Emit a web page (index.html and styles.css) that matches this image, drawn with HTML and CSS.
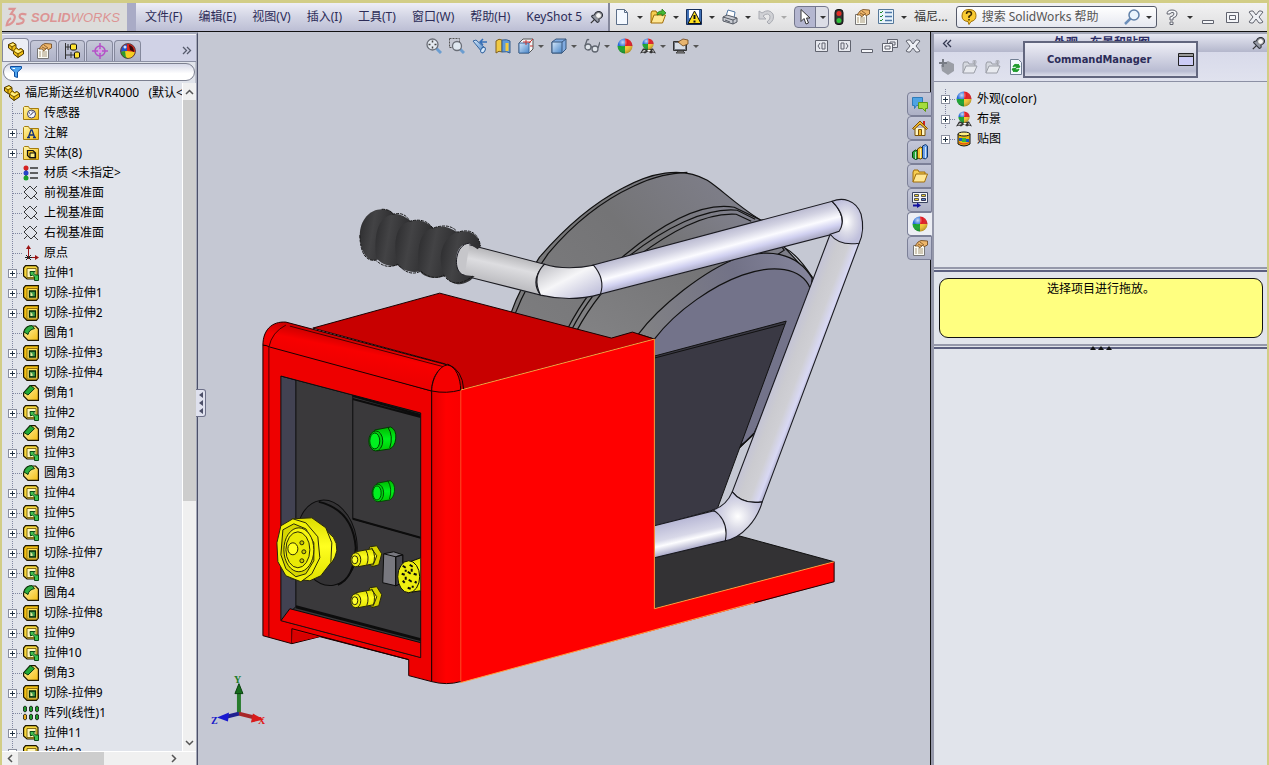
FILE: index.html
```html
<!DOCTYPE html>
<html lang="zh-CN">
<head>
<meta charset="utf-8">
<title>SolidWorks</title>
<link rel="stylesheet" href="styles.css">
</head>
<body>

<!-- icon library -->
<svg class="defs" aria-hidden="true">
  <defs>
    <linearGradient id="gold" x1="0" y1="0" x2="1" y2="1"><stop offset="0" stop-color="#fff7b0"/><stop offset="1" stop-color="#f5bd10"/></linearGradient>
    <linearGradient id="blue" x1="0" y1="0" x2="1" y2="1"><stop offset="0" stop-color="#d5e8fa"/><stop offset="1" stop-color="#4a86c8"/></linearGradient>
    <radialGradient id="shine" cx=".35" cy=".25" r=".8"><stop offset="0" stop-color="#fff" stop-opacity=".75"/><stop offset=".4" stop-color="#fff" stop-opacity="0"/><stop offset="1" stop-color="#000" stop-opacity=".3"/></radialGradient>
  </defs>
  <symbol id="part" viewBox="0 0 16 16"><path d="M.500 2.500L5 .500l3 2v3l2.500 2 2.500-1 2.500 2V12L10 15.500 5.500 12V9.500L.500 6z" fill="#f0bf14" stroke="#4a3500"/><path d="M.500 2.500L4 5l4-2.500M4 5v3.500M5.500 9l4.500 3 5.500-3.500M10 12v3.500M8 6L5.500 9" fill="none" stroke="#4a3500" stroke-width=".8"/><path d="M2 2.500l3-1 1.500 1L4 4zM6.500 9L8 7l3 2 2-1.500 1 1-4 2.500z" fill="#fff08a"/></symbol>
  <symbol id="ball" viewBox="0 0 16 16"><path d="M8 8L8 0.5A7.5 7.5 0 0 1 15.5 8z" fill="#e01c24"/><path d="M8 8H15.5A7.5 7.5 0 0 1 8 15.5z" fill="#f8c830"/><path d="M8 8V15.5A7.5 7.5 0 0 1 .5 8z" fill="#17a32c"/><path d="M8 8H.5A7.5 7.5 0 0 1 8 .5z" fill="#2469d8"/><circle cx="8" cy="8" r="7.5" fill="url(#shine)"/></symbol>
  <symbol id="balldark" viewBox="0 0 16 16"><circle cx="8" cy="8" r="7.5" fill="#d9251d"/><path d="M7 1a7.500 7.500 0 0 0-6 8l6-1z" fill="#2253c8"/><path d="M1 9l6-1 1 7.500A7.500 7.500 0 0 1 1 9z" fill="#2d9b2d"/><path d="M1 9l6-1 8 1a7.500 7.500 0 0 1-7 6.500q-4-2-7-6.500z" fill="#f6ce20"/><path d="M1 9l4-1 1 7q-4-2-5-6z" fill="#2d9b2d"/><path d="M9 2q5 1 5 7l-4-2z" fill="#380808"/><circle cx="8" cy="8" r="7.500" fill="none" stroke="#333" stroke-width=".7"/><circle cx="5" cy="4" r="1.500" fill="#fff" opacity=".8"/></symbol>
  <symbol id="scene" viewBox="0 0 16 16"><path d="M0 15.500l3-5h10l3 5-3-1-2 1-3-2-3 2-2-1z" fill="#333"/><path d="M2 14l2-2 2 1zM7 12l2 2 2-2zM12 13l1-1 1 2z" fill="#fff"/><use href="#ball" x="2" y="0" width="12" height="12"/></symbol>
  <symbol id="decal" viewBox="0 0 16 16"><path d="M2 3v10q6 4 12 0V3z" fill="#e8b90e" stroke="#111"/><ellipse cx="8" cy="3" rx="6" ry="2" fill="#ffef80" stroke="#111"/><path d="M3 7h4v3H3zM9 8h4v3H9z" fill="#1858c8"/><path d="M6 7h4v4H6z" fill="#38b83a"/><path d="M3 11q5 3 10 0v1q-5 3-10 0z" fill="#df2a1c"/></symbol>
  <symbol id="hand" viewBox="0 0 16 16"><path d="M1.500 5.500h11v10h-11z" fill="#fbfbf5" stroke="#777"/><path d="M3 9h2M6 9h5M3 11h2M6 11h5M3 13h2M6 13h5" stroke="#a8997a"/><path d="M3 6l3-4 3-1.500 6.500.500v4l-3 1.500-2-1-3 2.500-1-2z" fill="#eeb66b" stroke="#6b4418" stroke-width=".8"/><path d="M6 4l4 2M8 2l4 3" stroke="#6b4418" stroke-width=".7"/></symbol>
  <symbol id="config" viewBox="0 0 16 16"><path d="M1.500 0v16M1 4h6M1 12h10M4 1v6M7 9v6" stroke="#333" fill="none"/><path d="M6.500 2l1-1h4l1 1v4l-1 1h-4l-1-1zM10.500 10l1-1h3l1 1v4l-1 1h-4z" fill="#ffe330" stroke="#111"/></symbol>
  <symbol id="target" viewBox="0 0 16 16"><circle cx="8" cy="8" r="5" fill="none" stroke="#b551c7" stroke-width="1.500"/><path d="M8 0v6M8 10v6M0 8h6M10 8h6" stroke="#b551c7" stroke-width="1.500"/><circle cx="8" cy="8" r="2" fill="#e48df0"/></symbol>
  <symbol id="folder" viewBox="0 0 16 16"><path d="M.500 14.500v-12l1-1h4l1 2h9v11z" fill="url(#gold)" stroke="#a57c0c"/></symbol>
  <symbol id="sensor" viewBox="0 0 16 16"><use href="#folder"/><circle cx="8.500" cy="9" r="4" fill="#f5f8ff" stroke="#446"/><path d="M7 10.500l4-4M6 8h1M8.500 6h1" stroke="#224"/></symbol>
  <symbol id="note" viewBox="0 0 16 16"><use href="#folder"/><path d="M5.500 12l2.500-7h1l2.500 7M6.500 10h4M4 12.500h3M10 12.500h3" stroke="#103078" stroke-width="1.300" fill="none"/></symbol>
  <symbol id="solid" viewBox="0 0 16 16"><use href="#folder"/><path d="M4.500 5.500h5.500l2.500 2.500v5h-5.500l-2.500-2.500z" fill="#e6b818" stroke="#111" stroke-width="1.200"/><path d="M7 8h5v4.500H7z" fill="#ffef80" stroke="#111"/></symbol>
  <symbol id="material" viewBox="0 0 16 16"><path d="M3 2v12M7 3h8M7 8h8M7 13h8" stroke="#333" stroke-width="1.500"/><circle cx="3" cy="3" r="2.500" fill="#d52222"/><circle cx="3" cy="8" r="2.500" fill="#2543c8"/><circle cx="3" cy="13" r="2.500" fill="#19a02c"/></symbol>
  <symbol id="plane" viewBox="0 0 16 16"><path d="M7 1l7 7-6 6-7-7zM0 1l4 4M11 11l4 4M14 1l-3 3M4 11l-3 3" fill="none" stroke="#222" stroke-width=".9"/></symbol>
  <symbol id="origin" viewBox="0 0 16 16"><path d="M5.500 14V2M5 12.500h9" stroke="#9c1414"/><path d="M3 4l2.500-4L8 4zM12 10l4 2.500-4 2.500z" fill="#9c1414"/><path d="M3 10l5 5M8 10l-5 5M2 12.500h7" stroke="#222"/></symbol>
  <symbol id="extrude" viewBox="0 0 16 16"><path d="M.600 3l2-2.400H13l2 2V13l-2 1H4L.600 11z" fill="#f8d83c" stroke="#1d1600" stroke-width="1.200"/><path d="M4 3.500h9v9H4z" fill="#fff6b8" stroke="#6a5200" stroke-width=".8"/><path d="M7 6.500h5L10.500 8l2 2H15.500v5.500h-4v-3.500l-2-2L7.500 11z" fill="#3fc151" stroke="#0c4a14"/></symbol>
  <symbol id="cut" viewBox="0 0 16 16"><path d="M.600 3l2-2.400H15.400V13l-2 2.400H4L.600 12z" fill="#f2bf14" stroke="#1d1600" stroke-width="1.200"/><path d="M4 3.500h10.500v10.500H4z" fill="#ffe15a" stroke="#7a5c00" stroke-width=".8"/><path d="M6.500 6h6v6h-6z" fill="#3f9c4a" stroke="#062b0a" stroke-width="1.300"/><path d="M7.500 7l2 2v2h-2z" fill="#e5e89c"/></symbol>
  <symbol id="fillet" viewBox="0 0 16 16"><path d="M.600 8q1-6 6-7h6l2.800 3v11.400H5L.600 11z" fill="url(#gold)" stroke="#1d1600" stroke-width="1.200"/><path d="M1 7Q3 .600 9 .600l2.500 3Q6 4.500 5 9.500z" fill="#2fae42" stroke="#063c0d"/></symbol>
  <symbol id="chamfer" viewBox="0 0 16 16"><path d="M.600 8L7 .600h5l3.400 3.400v11.400H5L.600 11z" fill="url(#gold)" stroke="#1d1600" stroke-width="1.200"/><path d="M1 7.500L7.500.600l4 3L5 10z" fill="#22a838" stroke="#063c0d"/></symbol>
  <symbol id="pattern" viewBox="0 0 16 16"><g stroke="#111" stroke-width=".8"><path d="M.500 2q1.500-2 3 0v4q-1.500 2-3 0zM6.500 2q1.500-2 3 0v4q-1.500 2-3 0zM12.500 2q1.500-2 3 0v4q-1.500 2-3 0zM6.500 10q1.500-2 3 0v4q-1.500 2-3 0zM12.500 10q1.500-2 3 0v4q-1.500 2-3 0z" fill="#1f9a2c"/><path d="M.500 10q1.500-2 3 0v4q-1.500 2-3 0z" fill="#edab1e"/></g></symbol>
  <symbol id="pin" viewBox="0 0 16 16"><path d="M6 10l-5 5" stroke="#333" stroke-width="1.500"/><path d="M2 7l7 7q3 0 2-4l3-2q3-3 0-6T7 2L5 5Q2 5 2 7z" fill="#9498a4" stroke="#30333b" stroke-width="1.300"/><ellipse cx="10.500" cy="5.500" rx="3.500" ry="3.500" fill="#f7f7f7" stroke="#555" stroke-width=".7"/></symbol>
  <symbol id="close" viewBox="0 0 16 16"><path d="M1 3l2-1h2l3 4 3-4h2l2 1-4 5 4 5-2 1h-2l-3-4-3 4H3l-2-1 4-5z" fill="#eef0f5" stroke="#60636e"/></symbol>
  <symbol id="min" viewBox="0 0 16 16"><path d="M2.500 11.500h11v3h-11z" fill="#f5f6f9" stroke="#60636e"/></symbol>
  <symbol id="max" viewBox="0 0 16 16"><path d="M2.500 3.500h12v10h-12zM5.500 6.500h6v4h-6z" fill="#f5f6f9" stroke="#60636e"/></symbol>
  <symbol id="restore" viewBox="0 0 16 16"><path d="M5.500 1.500h10v8h-10zM8 4h5v3H8z" fill="#e8eaef" stroke="#60636e"/><path d="M.500 5.500h10v8H.500zM3 8h5v3H3z" fill="#f5f6f9" stroke="#60636e"/></symbol>
  <symbol id="open" viewBox="0 0 16 16"><path d="M1 14V4l1-2h4l1 2h6v3" fill="#f6cd50" stroke="#a06d08"/><path d="M1 14l3-8h11.500l-3 8z" fill="#ffe794" stroke="#a06d08"/></symbol>
  <symbol id="grayopen" viewBox="0 0 16 16"><path d="M1 14V5l1-2h4l1 2h6v3" fill="#d5d8df" stroke="#9a9da6"/><path d="M1 14l3-7h11l-3 7z" fill="#e8eaef" stroke="#9a9da6"/><path d="M10 3h5M12.500 1v5M11 1l3 4M14 1l-3 4" stroke="#a4a7ae" stroke-width=".8"/></symbol>
  <symbol id="zoomfit" viewBox="0 0 16 16"><path d="M10 10l5 5" stroke="#6b9dd0" stroke-width="3"/><circle cx="6.500" cy="6.500" r="5.500" fill="#e4eaf1" stroke="#6b6f78" stroke-width="1.300"/><path d="M6.500 2.500v2M6.500 8.500v2M2.500 6.500h2M8.500 6.500h2" stroke="#444" stroke-width="1.500"/></symbol>
  <symbol id="zoomarea" viewBox="0 0 16 16"><path d="M.500.500h10v9H.500z" fill="none" stroke="#555" stroke-dasharray="2 1"/><path d="M11 11l4 4" stroke="#6b9dd0" stroke-width="3"/><circle cx="8" cy="8" r="4.500" fill="#dfe7f0" stroke="#6b6f78" stroke-width="1.300"/></symbol>
  <symbol id="prevview" viewBox="0 0 16 16"><path d="M1 3l3-1 9 8-3 4z" fill="url(#blue)" stroke="#3465a0"/><ellipse cx="11" cy="12" rx="2" ry="3" transform="rotate(30 11 12)" fill="#d4e8fb" stroke="#3465a0"/><path d="M15 4H9M11 1L8 4l3 3" fill="none" stroke="#346fb8" stroke-width="1.500"/></symbol>
  <symbol id="section" viewBox="0 0 16 16"><path d="M1 3q3-3 6-1v12q-3-2-6 1z" fill="#efc944" stroke="#806020"/><path d="M7 2q5-1 8 1v12q-3-2-8-1z" fill="#5f9bdb" stroke="#375f90"/><path d="M10.500 5h3v8h-3z" fill="#f3cb3e"/></symbol>
  <symbol id="viewcube" viewBox="0 0 16 16"><path d="M1 5l4-4h10v10l-4 4H1z" fill="#f4f4f4" stroke="#555"/><path d="M1 5h10v10H1z" fill="url(#blue)" stroke="#3f6da2"/><path d="M11 5l4-4M8 2v5M5 4h8M12 8h3" stroke="#c43434" fill="none"/></symbol>
  <symbol id="cube" viewBox="0 0 16 16"><path d="M1 4l4-3h10v10l-4 4H1z" fill="#80abe0" stroke="#39587e"/><path d="M1 4h10v11H1z" fill="url(#blue)" stroke="#39587e"/><path d="M11 4l4-3" stroke="#39587e"/></symbol>
  <symbol id="glasses" viewBox="0 0 16 16"><g fill="#dfe4ea" stroke="#606670" stroke-width="1.300"><circle cx="4" cy="9" r="3"/><circle cx="11" cy="11" r="3"/><path d="M7 9q1-1 1 1M1 8l2-6q1-1 2 0M14 10l2-6" fill="none"/></g></symbol>
  <symbol id="monitor" viewBox="0 0 16 16"><path d="M.500 3.500h13v9H.500z" fill="#707580" stroke="#333"/><path d="M2 5h10v6H2z" fill="#d7dde5"/><path d="M3 15h9l-2-2H5z" fill="#888" stroke="#444"/><path d="M5 4l5-3 5 1v4l-5 2z" fill="#e7b46e" stroke="#6b4418" stroke-width=".8"/></symbol>
</svg>

<header class="titlebar">
  <div class="logo">
    <svg width="24" height="22" viewBox="0 0 28 22" aria-hidden="true"><g fill="none" stroke="#dc9494" stroke-width="2.500"><path d="M4 1.500h7l-4 6q6 0 4 6-2 6-9 7 1-6 5-8"/><path d="M25 8q-8-2-8 2 0 2 3 3t1 4q-2 2-8 2"/></g></svg>
    <span class="wordmark"><b>SOLID</b>WORKS</span>
  </div>
  <nav class="menu">
    <button>文件(F)</button>
    <button>编辑(E)</button>
    <button>视图(V)</button>
    <button>插入(I)</button>
    <button>工具(T)</button>
    <button>窗口(W)</button>
    <button>帮助(H)</button>
    <button>KeyShot 5</button>
    <button class="pin" aria-label="pin"><svg class="ic small"><use href="#pin"/></svg></button>
  </nav>
  <div class="toolbar">
    <button class="tool drop" aria-label="新建"><svg class="ic" viewBox="0 0 16 16"><path d="M2.500.500h8l3 3v12h-11z" fill="#f4f9ff" stroke="#5b6e88"/><path d="M10.500.500v3h3" fill="none" stroke="#5b6e88"/></svg></button>
    <button class="tool drop" aria-label="打开"><svg class="ic" viewBox="0 0 16 16"><use href="#open"/><path d="M7 6q0-4 5-4V0l4 4-4 3V5Q9 5 7 6z" fill="#45b935" stroke="#1c6f13" stroke-width=".7"/></svg></button>
    <button class="tool drop" aria-label="保存"><svg class="ic" viewBox="0 0 16 16"><path d="M.500.500h15v15H.500z" fill="#3f6fb5" stroke="#16305e"/><path d="M3 1h10v8H3z" fill="#fff"/><path d="M8.500 2L15 14.500H2z" fill="#ffe11d" stroke="#111"/><path d="M8.500 6v4M8.500 11.500v2" stroke="#111" stroke-width="2"/></svg></button>
    <button class="tool drop" aria-label="打印"><svg class="ic" viewBox="0 0 16 16"><path d="M4 7l2-6 7 2-1 6z" fill="#fff" stroke="#5277a2"/><path d="M1 8l4-2 10 3v4l-4 2-10-3z" fill="#c8cbd2" stroke="#555a64"/><path d="M1 8l10 3 4-2M11 11v4M3 11l5 2" fill="none" stroke="#555a64"/></svg></button>
    <button class="tool drop off" aria-label="撤消"><svg class="ic" viewBox="0 0 16 16"><path d="M1 2v8h7L5 7q5-4 7 0 1 3-3 6l2 2q6-4 4-10-4-6-11-1z" fill="#d0d1d5" stroke="#a9abb2"/></svg></button>
    <button class="select drop" aria-label="选择"><svg class="ic" viewBox="0 0 16 16"><path d="M4 .500v12l3-3 2 5.500 2.500-1L9.500 9H13z" fill="#fff" stroke="#333"/></svg></button>
    <button class="tool light" aria-label="重建模型"><svg class="ic" viewBox="0 0 16 16"><rect x="4" y=".500" width="8" height="15" rx="3" fill="#333" stroke="#111"/><circle cx="8" cy="4.500" r="2.500" fill="#e52d26"/><circle cx="8" cy="11.500" r="2.500" fill="#2fc23b"/></svg></button>
    <button class="tool" aria-label="文件属性"><svg class="ic"><use href="#hand"/></svg></button>
    <button class="tool drop" aria-label="选项"><svg class="ic" viewBox="0 0 16 16"><path d="M.500.500h15v14H.500z" fill="#e8f3fb" stroke="#56789a"/><path d="M2 3l1 1 2-2M2 7l1 1 2-2M2 11l1 1 2-2" stroke="#1c8a2c" fill="none"/><path d="M7 3.500h7M7 7.500h7M7 11.500h7" stroke="#4c78a8" stroke-width="1.500"/></svg></button>
    <span class="docname">福尼...</span>
    <form class="search">
      <svg class="ic" viewBox="0 0 16 16"><path d="M8 .500q7 0 7 6 0 5-5 6l-2 3-1-3Q1 12 1 7 1 .500 8 .500z" fill="#f9cb32" stroke="#9c6e06"/><path d="M5.500 5q0-2.500 2.500-2.500T10.500 5Q10.500 6 8 7.500V9M8 10v1.500" fill="none" stroke="#3b2900" stroke-width="1.500"/></svg>
      <input type="text" aria-label="搜索" placeholder="搜索 SolidWorks 帮助">
      <button type="button" class="drop" aria-label="搜索"><svg class="ic" viewBox="0 0 16 16"><path d="M7 9l-6 6" stroke="#6d8fba" stroke-width="2.500"/><circle cx="10" cy="6" r="5" fill="#eaf4fd" stroke="#6080a8" stroke-width="1.500"/></svg></button>
    </form>
    <div class="wincontrols">
      <button class="tool drop" aria-label="帮助"><svg class="ic" viewBox="0 0 16 16"><path d="M3 5q0-4 5-4t5 4q0 3-4 4v2H6V8q4-1 4-3T8 3.500 6 5zM6 13h3v2.500H6z" fill="#f5f6f9" stroke="#60636e"/></svg></button>
      <button aria-label="最小化"><svg class="ic"><use href="#min"/></svg></button>
      <button aria-label="最大化"><svg class="ic"><use href="#max"/></svg></button>
      <button aria-label="关闭"><svg class="ic"><use href="#close"/></svg></button>
    </div>
  </div>
</header>

<main class="workspace">

  <aside class="manager">
    <div class="tabs">
      <button class="tab active" aria-label="FeatureManager"><svg class="ic"><use href="#part"/></svg></button>
      <button class="tab" aria-label="PropertyManager"><svg class="ic"><use href="#hand"/></svg></button>
      <button class="tab" aria-label="ConfigurationManager"><svg class="ic"><use href="#config"/></svg></button>
      <button class="tab" aria-label="DimXpertManager"><svg class="ic"><use href="#target"/></svg></button>
      <button class="tab" aria-label="DisplayManager"><svg class="ic"><use href="#balldark"/></svg></button>
      <button class="more" aria-label="更多"><svg width="10" height="9" viewBox="0 0 10 9"><path d="M1 1l3.500 3.500L1 8M5 1l3.500 3.500L5 8" fill="none" stroke="#555a6c" stroke-width="1.300"/></svg></button>
    </div>
    <div class="filter">
      <input type="text" aria-label="过滤器">
      <svg width="12" height="12" viewBox="0 0 12 12"><path d="M.500.500h11v2L7.500 6v5.500l-3-1V6L.500 2.500z" fill="#4fa4ee" stroke="#0d4a9c"/><path d="M2 2h3v1H3z" fill="#fff"/></svg>
    </div>
    <div class="treebox">
      <ul class="tree">
        <li class="root"><svg class="ic"><use href="#part"/></svg>福尼斯送丝机VR4000&nbsp;&nbsp; (默认&lt;</li>
        <li><span class="twig"></span><svg class="ic"><use href="#sensor"/></svg>传感器</li>
        <li><span class="twig"><button class="exp" aria-label="展开"></button></span><svg class="ic"><use href="#note"/></svg>注解</li>
        <li><span class="twig"><button class="exp" aria-label="展开"></button></span><svg class="ic"><use href="#solid"/></svg>实体(8)</li>
        <li><span class="twig"></span><svg class="ic"><use href="#material"/></svg>材质 &lt;未指定&gt;</li>
        <li><span class="twig"></span><svg class="ic"><use href="#plane"/></svg>前视基准面</li>
        <li><span class="twig"></span><svg class="ic"><use href="#plane"/></svg>上视基准面</li>
        <li><span class="twig"></span><svg class="ic"><use href="#plane"/></svg>右视基准面</li>
        <li><span class="twig"></span><svg class="ic"><use href="#origin"/></svg>原点</li>
        <li><span class="twig"><button class="exp" aria-label="展开"></button></span><svg class="ic"><use href="#extrude"/></svg>拉伸1</li>
        <li><span class="twig"><button class="exp" aria-label="展开"></button></span><svg class="ic"><use href="#cut"/></svg>切除-拉伸1</li>
        <li><span class="twig"><button class="exp" aria-label="展开"></button></span><svg class="ic"><use href="#cut"/></svg>切除-拉伸2</li>
        <li><span class="twig"></span><svg class="ic"><use href="#fillet"/></svg>圆角1</li>
        <li><span class="twig"><button class="exp" aria-label="展开"></button></span><svg class="ic"><use href="#cut"/></svg>切除-拉伸3</li>
        <li><span class="twig"><button class="exp" aria-label="展开"></button></span><svg class="ic"><use href="#cut"/></svg>切除-拉伸4</li>
        <li><span class="twig"></span><svg class="ic"><use href="#chamfer"/></svg>倒角1</li>
        <li><span class="twig"><button class="exp" aria-label="展开"></button></span><svg class="ic"><use href="#extrude"/></svg>拉伸2</li>
        <li><span class="twig"></span><svg class="ic"><use href="#chamfer"/></svg>倒角2</li>
        <li><span class="twig"><button class="exp" aria-label="展开"></button></span><svg class="ic"><use href="#extrude"/></svg>拉伸3</li>
        <li><span class="twig"></span><svg class="ic"><use href="#fillet"/></svg>圆角3</li>
        <li><span class="twig"><button class="exp" aria-label="展开"></button></span><svg class="ic"><use href="#extrude"/></svg>拉伸4</li>
        <li><span class="twig"><button class="exp" aria-label="展开"></button></span><svg class="ic"><use href="#extrude"/></svg>拉伸5</li>
        <li><span class="twig"><button class="exp" aria-label="展开"></button></span><svg class="ic"><use href="#extrude"/></svg>拉伸6</li>
        <li><span class="twig"><button class="exp" aria-label="展开"></button></span><svg class="ic"><use href="#cut"/></svg>切除-拉伸7</li>
        <li><span class="twig"><button class="exp" aria-label="展开"></button></span><svg class="ic"><use href="#extrude"/></svg>拉伸8</li>
        <li><span class="twig"></span><svg class="ic"><use href="#fillet"/></svg>圆角4</li>
        <li><span class="twig"><button class="exp" aria-label="展开"></button></span><svg class="ic"><use href="#cut"/></svg>切除-拉伸8</li>
        <li><span class="twig"><button class="exp" aria-label="展开"></button></span><svg class="ic"><use href="#extrude"/></svg>拉伸9</li>
        <li><span class="twig"><button class="exp" aria-label="展开"></button></span><svg class="ic"><use href="#extrude"/></svg>拉伸10</li>
        <li><span class="twig"></span><svg class="ic"><use href="#chamfer"/></svg>倒角3</li>
        <li><span class="twig"><button class="exp" aria-label="展开"></button></span><svg class="ic"><use href="#cut"/></svg>切除-拉伸9</li>
        <li><span class="twig"></span><svg class="ic"><use href="#pattern"/></svg>阵列(线性)1</li>
        <li><span class="twig"><button class="exp" aria-label="展开"></button></span><svg class="ic"><use href="#extrude"/></svg>拉伸11</li>
        <li><span class="twig"><button class="exp" aria-label="展开"></button></span><svg class="ic"><use href="#extrude"/></svg>拉伸12</li>
      </ul>
      <div class="vscroll">
        <button aria-label="向上"><svg width="9" height="6" viewBox="0 0 9 6"><path d="M1 5l3.500-3.500L8 5" fill="none" stroke="#555" stroke-width="1.500"/></svg></button>
        <div class="vthumb"></div>
        <button class="end" aria-label="向下"><svg width="9" height="6" viewBox="0 0 9 6"><path d="M1 1l3.500 3.500L8 1" fill="none" stroke="#555" stroke-width="1.500"/></svg></button>
      </div>
    </div>
    <div class="hscroll">
      <button aria-label="向左"><svg width="6" height="9" viewBox="0 0 6 9"><path d="M5 1L1.500 4.500 5 8" fill="none" stroke="#555" stroke-width="1.500"/></svg></button>
      <div class="hthumb"></div>
      <button class="end" aria-label="向右"><svg width="6" height="9" viewBox="0 0 6 9"><path d="M1 1l3.500 3.500L1 8" fill="none" stroke="#555" stroke-width="1.500"/></svg></button>
    </div>
  </aside>

  <section class="viewport">
    <svg class="scene" viewBox="198 32 733 733" preserveAspectRatio="xMidYMid meet">
      <defs>
        <linearGradient id="tubeA" gradientUnits="userSpaceOnUse" x1="505" y1="253" x2="498" y2="284"><stop offset="0" stop-color="#b5b5b8"/><stop offset=".4" stop-color="#dddde0"/><stop offset="1" stop-color="#bcbcc0"/></linearGradient>
        <linearGradient id="tubeB" gradientUnits="userSpaceOnUse" x1="712" y1="233" x2="720" y2="263"><stop offset="0" stop-color="#b9b9d0"/><stop offset=".25" stop-color="#d2d2e2"/><stop offset=".55" stop-color="#fbfbff"/><stop offset=".8" stop-color="#d0d0f0"/><stop offset="1" stop-color="#acacc6"/></linearGradient>
        <linearGradient id="tubeC" gradientUnits="userSpaceOnUse" x1="782" y1="363" x2="813" y2="375"><stop offset="0" stop-color="#c4c4d6"/><stop offset=".3" stop-color="#cbcbd0"/><stop offset=".6" stop-color="#cfcfd4"/><stop offset=".85" stop-color="#d8d8f4"/><stop offset="1" stop-color="#aaaac8"/></linearGradient>
        <linearGradient id="tubeD" gradientUnits="userSpaceOnUse" x1="686" y1="519" x2="693" y2="549"><stop offset="0" stop-color="#b9b9d6"/><stop offset=".5" stop-color="#d8d8e8"/><stop offset=".68" stop-color="#fdfdff"/><stop offset="1" stop-color="#a9a9c8"/></linearGradient>
        <linearGradient id="elbow" x1="0" y1="0" x2="1" y2="1"><stop offset="0" stop-color="#b8b8be"/><stop offset=".45" stop-color="#f6f6f8"/><stop offset="1" stop-color="#b4b4d4"/></linearGradient>
        <radialGradient id="knee"><stop offset="0" stop-color="#fff"/><stop offset=".5" stop-color="#dcdce8"/><stop offset="1" stop-color="#c0c0dc"/></radialGradient>
        <linearGradient id="drum" x1="0" y1="1" x2="1" y2="0"><stop offset="0" stop-color="#848486"/><stop offset=".6" stop-color="#747476"/><stop offset="1" stop-color="#858596"/></linearGradient>
        <linearGradient id="flange" gradientUnits="userSpaceOnUse" x1="640" y1="330" x2="812" y2="270"><stop offset="0" stop-color="#828284"/><stop offset=".6" stop-color="#727287"/><stop offset="1" stop-color="#85859c"/></linearGradient>
        <linearGradient id="pillar" x1="0" x2="1" y1="0" y2="0"><stop offset="0" stop-color="#e20000"/><stop offset=".5" stop-color="#ff0000"/><stop offset="1" stop-color="#fa0000"/></linearGradient>
        <linearGradient id="rolltop" gradientUnits="userSpaceOnUse" x1="362" y1="341" x2="356" y2="371"><stop offset="0" stop-color="#d00000"/><stop offset=".35" stop-color="#f80000"/><stop offset="1" stop-color="#ed0000"/></linearGradient>
        <linearGradient id="grip" x1="0" y1="0" x2="1" y2=".25"><stop offset="0" stop-color="#2b2b2d"/><stop offset=".45" stop-color="#434345"/><stop offset="1" stop-color="#2d2d2f"/></linearGradient>
        <linearGradient id="yel" x1="0" y1="0" x2="0" y2="1"><stop offset="0" stop-color="#dcdc00"/><stop offset=".45" stop-color="#ffff20"/><stop offset="1" stop-color="#e2e200"/></linearGradient>
        <linearGradient id="grn" x1="0" y1="0" x2="0" y2="1"><stop offset="0" stop-color="#00b800"/><stop offset=".5" stop-color="#00f01c"/><stop offset="1" stop-color="#00c800"/></linearGradient>
      </defs>

      <!-- wire drum -->
      <g stroke="#111" stroke-width="1.2" fill="none">
        <path d="M511 314C518 294 529 274 540 257C565 228 592 204 623 188C650 173 682 165 708 180C722 189 736 204 760 219L786 248L813 277L812 300L755 433L655 500L600 345z" fill="url(#drum)"/>
        <path d="M515 315C524 292 535 272 549 253C575 222 604 200 634 186C656 175 672 173 688 172"/>
        <path d="M568 329C580 305 600 278 625 255C660 226 700 201 735 207L764 221L785 250L640 345L568 345z" fill="url(#drum)"/>
        <path d="M572 330C585 304 603 281 628 257C665 228 706 207 738 210L756 219M577 331C590 307 607 284 633 260C670 232 705 212 737 214L752 221"/>
        <path d="M786 248Q798 254 813 277"/>
        <path d="M639 334C660 306 705 270 740 257C768 249 797 251 813 278L811 300L755 433L741 447L655 500V339z" fill="url(#flange)"/>
        <path d="M655 339C678 309 715 285 743 275C774 264 802 267 811 288V310L755 433L741 447L655 500z" fill="#73738a"/>
        <path d="M755 434Q747 442 739 447"/>
      </g>

      <!-- plate under drum -->
      <path d="M655 356L787 321L718 509L655 527z" fill="#3a3944" stroke="#111"/>
      <path d="M655 358L785 324" stroke="#111" fill="none"/>
      <path d="M655 558L736 535L835 562L655 609z" fill="#333234" stroke="#111"/>

      <!-- handle tubes -->
      <g stroke="#1a1a20" stroke-width="1.1">
        <path d="M655 526L714 511L734 516L726 541L655 558z" fill="url(#tubeD)"/>
        <path d="M831 234L860 243L763 502Q743 505 733 492z" fill="url(#tubeC)"/>
        <path d="M733 492Q743 505 763 502C758 520 743 538 726 541Q730 521 714 510Q727 506 733 492z" fill="url(#knee)"/>
        <path d="M593 265L833 201Q848 216 841 232L601 294z" fill="url(#tubeB)"/>
        <path d="M833 201C843 197 857 199 862 214Q866 230 860 243Q840 246 831 234L840 231Q849 217 833 201z" fill="url(#knee)"/>
        <path d="M464 243L545 264Q530 280 541 295L462 275z" fill="url(#tubeA)"/>
        <path d="M545 264C560 269 580 268 594 265Q606 279 601 294C580 300 558 299 541 295Q532 277 545 264z" fill="url(#elbow)"/>
      </g>

      <!-- rubber grip -->
      <g fill="url(#grip)">
        <path d="M382 209C392 209 394 214 394 214L390 255L376 260C366 262 360 248 360 235C360 220 370 209 382 209z"/>
        <path d="M393 214C402 212 411 221 411 221L402 262L398 265C389 268 376 261 376 255Q373 218 393 214z"/>
        <path d="M410 221C424 217 434 228 434 228L424 270C412 275 397 268 397 262Q391 226 410 221z"/>
        <path d="M433 228C446 222 459 233 459 233L447 275C435 281 420 276 419 268Q416 231 433 228z"/>
        <path d="M463 231C474 230 480 238 481 246L478 249L469 243C453 244 453 272 466 275L475 276C469 283 463 284 458 284C445 282 441 269 441 257C442 242 452 231 463 231z"/>
      </g>
      <path d="M382 209Q391 209 393 214Q405 211 410 221Q426 217 433 228Q450 222 458 232Q477 226 481 246M360 235Q361 262 376 260Q387 270 398 264Q409 277 421 271Q433 281 444 275Q455 290 473 276" fill="none" stroke="#151515" stroke-dasharray="3 1"/>
      <path d="M470 243C455 243 452 273 465 275z" fill="#c6c6ca"/>
      <path d="M470 243C455 243 452 273 465 275" fill="none" stroke="#1a1a20"/>

      <!-- cabinet -->
      <path d="M313 328L440 293L612 338L633 332L655 339L461 390L446 364z" fill="#c80000" stroke="#1a0000"/>
      <path d="M461 390L655 339V609L835 562V582L461 683z" fill="#ff0000"/>
      <path d="M835 562V582L755 603" fill="none" stroke="#1a0000"/>
      <path d="M461 683V390L655 339V609L835 562M461 683L755 603" fill="none" stroke="#ffa040" stroke-width="1"/>
      <path d="M263 345V636L292 644L320 637L409 660V676L432 682V391L270 345z" fill="#ee0000" stroke="#1a0000"/>
      <path d="M263 345C263 330 272 321 286 322L448 365C438 368 432 378 432 391L270 347Q266 345 263 345z" fill="url(#rolltop)" stroke="#1a0000"/>
      <path d="M290 326L445 367M269 347V637M269 347Q272 332 286 325" fill="none" stroke="#450000"/>
      <path d="M432 391V682Q447 686 461 682V390z" fill="url(#pillar)"/>
      <path d="M432 391V682Q447 686 461 682" fill="none" stroke="#1a0000"/>
      <path d="M432 391C432 379 440 365 448 365C456 366 461 378 461 390Q447 394 432 391z" fill="#f40000" stroke="#1a0000"/>
      <path d="M448 364Q463 370 464 389" fill="none" stroke="#1a0000"/>
      <path d="M292 644V629L409 660" fill="none" stroke="#1a0000"/>
      <path d="M293 631L320 637L292 643z" fill="#d80000"/>

      <!-- front panel -->
      <clipPath id="opening"><path d="M281 376L421 413V658L281 621z"/></clipPath>
      <path d="M281 376L421 413V658L281 621z" fill="#3a393b" stroke="#111"/>
      <g clip-path="url(#opening)" stroke="#0c0c0c">
        <path d="M281 376L296 380V607L281 621z" fill="#424252"/>
        <path d="M281 376L353 395V519L421 538M353 395L421 413" fill="none"/>
        <path d="M353 396L421 415M353 399L421 417M353 519L421 538" fill="none" stroke-width="2"/>
        <path d="M296 607L421 640" fill="none" stroke-width="3"/>
        <path d="M281 621L290 609L421 643V658z" fill="#f00000"/>
        <ellipse cx="327" cy="543" rx="30" ry="43" transform="rotate(-9 327 543)" fill="#333234"/>
        <path d="M319 502Q353 510 356 548Q354 579 338 585" fill="none" stroke-width="2"/>
        <path d="M384 554L394 552L403 555V583L396 586L383 583z" fill="#78787f"/>
        <path d="M396 557L403 555V583L396 586z" fill="#48484f"/>
        <path d="M384 554L396 557L403 555M396 557V586" fill="none"/>
        <path d="M405 564L421 558V591L408 593z" fill="url(#yel)"/>
        <ellipse cx="409" cy="577" rx="11" ry="16" fill="#eeee10"/>
        <path d="M403 566l3 2M410 565l3 2M402 574l3 1M408 572l3 2M414 574l3 1M403 581l2 2M409 580l3 2M415 582l2 1M408 588l3 1M406 577v3M412 569v3M413 586v2M406 570v2" stroke-width="2"/>
      </g>

      <!-- main connector -->
      <g stroke="#28280a">
        <path d="M321 529Q338 535 337 551Q334 565 324 568L300 580V520z" fill="url(#yel)"/>
        <path d="M292 519L312 518L326 528L332 543L331 563L321 576L310 581L291 579z" fill="url(#yel)"/>
        <path d="M281 526L293 519L306 523L318 537L320 558L312 574L301 582L286 576L278 562L277 543z" fill="#efef08"/>
        <path d="M283 530L294 524L306 529L314 543L314 561L306 574L296 577L286 569L281 555z" fill="#d6d600"/>
        <ellipse cx="299" cy="550" rx="15" ry="22" fill="#f5f510"/>
        <ellipse cx="298" cy="550" rx="12" ry="18" fill="#e9e905"/>
        <ellipse cx="293" cy="549" rx="5" ry="6" fill="#ffff20"/>
        <g fill="#c8c800"><circle cx="302" cy="543" r="2"/><circle cx="304" cy="552" r="2"/><circle cx="302" cy="561" r="2"/></g>
      </g>
      <!-- small gas fittings -->
      <g id="fitting" stroke="#28280a">
        <path d="M370 547L377 546L382 554L379 565L372 567L367 557z" fill="#d6d600"/>
        <path d="M356 552L372 549L377 556L374 564L358 567z" fill="url(#yel)"/>
        <ellipse cx="356" cy="560" rx="5" ry="7" fill="#eeee10"/><ellipse cx="355" cy="560" rx="3" ry="4" fill="#ffff30"/>
        <path d="M366 550Q370 557 367 565M372 548Q377 556 373 566" fill="none"/>
      </g>
      <use href="#fitting" y="41"/>
      <!-- indicator lamps -->
      <g id="lamp" stroke="#003c00">
        <path d="M375 430L391 427Q397 430 396 439Q395 447 390 449L377 451z" fill="url(#grn)"/>
        <ellipse cx="376" cy="441" rx="7" ry="10" fill="#00d010"/><ellipse cx="375" cy="441" rx="5" ry="8" fill="#00f020"/>
        <path d="M388 427Q394 436 390 448" fill="none"/>
      </g>
      <use href="#lamp" transform="translate(66 105) scale(.83 .88)"/>

      <!-- axis triad -->
      <path d="M239 714V692" stroke="#287c2c" stroke-width="4"/><path d="M235 694L239 684L243 694z" fill="#176d1d" stroke="#0b4210"/>
      <path d="M239 714L255 718" stroke="#a82628" stroke-width="4"/><path d="M253 714L264 720L251 723z" fill="#d81b1b"/>
      <path d="M239 714L227 717" stroke="#202090" stroke-width="4"/><path d="M229 713L217 718L228 722z" fill="#1919d0"/>
      <text class="axis" x="234" y="683" fill="#207c24">Y</text>
      <text class="axis" x="258" y="724" fill="#e01818">X</text>
      <text class="axis" x="211" y="724" fill="#1818c8">Z</text>
    </svg>

    <div class="headsup">
      <button aria-label="整屏显示全图"><svg class="ic"><use href="#zoomfit"/></svg></button>
      <button aria-label="局部放大"><svg class="ic"><use href="#zoomarea"/></svg></button>
      <button aria-label="上一视图"><svg class="ic"><use href="#prevview"/></svg></button>
      <button aria-label="剖面视图"><svg class="ic"><use href="#section"/></svg></button>
      <button class="drop" aria-label="视图定向"><svg class="ic"><use href="#viewcube"/></svg></button>
      <button class="drop" aria-label="显示样式"><svg class="ic"><use href="#cube"/></svg></button>
      <button class="drop" aria-label="隐藏/显示"><svg class="ic"><use href="#glasses"/></svg></button>
      <button aria-label="编辑外观"><svg class="ic"><use href="#ball"/></svg></button>
      <button class="drop" aria-label="应用布景"><svg class="ic"><use href="#scene"/></svg></button>
      <button class="drop" aria-label="视图设定"><svg class="ic"><use href="#monitor"/></svg></button>
    </div>

    <div class="doccontrols">
      <button aria-label="左平铺"><svg class="ic" viewBox="0 0 16 16"><path d="M2.500 2.500h12v11h-12z" fill="#e6e8ee" stroke="#60636e"/><path d="M7 5L5 8l2 3M9 5h3v6H9z" fill="none" stroke="#60636e"/></svg></button>
      <button aria-label="右平铺"><svg class="ic" viewBox="0 0 16 16"><path d="M2.500 2.500h12v11h-12z" fill="#e6e8ee" stroke="#60636e"/><path d="M10 5l2 3-2 3M5 5h3v6H5z" fill="none" stroke="#60636e"/></svg></button>
      <button aria-label="最小化"><svg class="ic"><use href="#min"/></svg></button>
      <button aria-label="还原"><svg class="ic"><use href="#restore"/></svg></button>
      <button aria-label="关闭"><svg class="ic"><use href="#close"/></svg></button>
    </div>

    <button class="handle" aria-label="折叠"><svg width="6" height="24" viewBox="0 0 6 24"><path d="M5 1v6L1 4zM5 9v6l-4-3zM5 17v6l-4-3z" fill="#4d5068"/></svg></button>

    <div class="sidetabs">
      <button aria-label="论坛"><svg class="ic" viewBox="0 0 16 16"><path d="M.500 1.500h10v8h-6l-2 3v-3h-2z" fill="#4fa3e4" stroke="#2f7bb8"/><path d="M6.500 6.500h9v6h-2v3l-3-3h-4z" fill="#a5dc3c" stroke="#5e9a14"/></svg></button>
      <button aria-label="资源"><svg class="ic" viewBox="0 0 16 16"><path d="M3 8v7.500h10V8" fill="#fff6c4" stroke="#7b5207"/><path d="M11 1h2v4h-2z" fill="#c22"/><path d="M.500 8.500L8 1l7.500 7.500-1 1L8 4 2 9.500z" fill="#f2ba2c" stroke="#7b4e07"/><path d="M6.500 9.500h3v6h-3z" fill="#f2ba2c" stroke="#7b5207"/></svg></button>
      <button aria-label="设计库"><svg class="ic" viewBox="0 0 16 16"><path d="M.500 8l3-2 2 1v8l-2 .500-3-2z" fill="#27a53a" stroke="#06400f"/><path d="M5.500 5l3-2 2 1v10l-2 1-3-1z" fill="#f3c52b" stroke="#614400"/><path d="M10.500 2l3-1.500 2 1.500v11l-2 2-3-1z" fill="#6aa0e8" stroke="#12396f"/><path d="M3.500 8v7M8.500 5v9M13.500 3v11" stroke="#fff" opacity=".7"/></svg></button>
      <button aria-label="文件探索器"><svg class="ic"><use href="#open"/></svg></button>
      <button aria-label="视图调色板"><svg class="ic" viewBox="0 0 16 16"><path d="M.500.500h15v10H.500z" fill="#f3f5f9" stroke="#3b4460"/><path d="M2.500 2.500h4v2h-4zM9.500 2.500h4v2h-4zM2.500 6.500h4v2h-4z" fill="#f2d02e" stroke="#555"/><path d="M9.500 6.500h4v2h-4z" fill="#5d8ed0" stroke="#335"/><path d="M1 13.500h6" stroke="#1111a0" stroke-width="2"/><path d="M5 10.500l4 3-4 2.500z" fill="#1111a0"/></svg></button>
      <button class="active" aria-label="外观"><svg class="ic"><use href="#ball"/></svg></button>
      <button aria-label="自定义属性"><svg class="ic"><use href="#hand"/></svg></button>
    </div>
  </section>

  <aside class="taskpane">
    <div class="panehead">
      <button aria-label="折叠"><svg width="10" height="9" viewBox="0 0 10 9"><path d="M5 1L1.500 4.500 5 8M9 1L5.500 4.500 9 8" fill="none" stroke="#333850" stroke-width="1.300"/></svg></button>
      <h2>外观、布景和贴图</h2>
      <button aria-label="固定"><svg class="ic small"><use href="#pin"/></svg></button>
    </div>
    <div class="panetools">
      <button aria-label="添加"><svg class="ic" viewBox="0 0 16 16"><path d="M2 6l7-4 6 3v7l-6 4-6-4z" fill="#9b9ea6"/><path d="M4 0v8M0 4h8" stroke="#777b85" stroke-width="2"/></svg></button>
      <button aria-label="打开"><svg class="ic"><use href="#grayopen"/></svg></button>
      <button aria-label="新文件夹"><svg class="ic"><use href="#grayopen"/></svg></button>
      <button aria-label="刷新"><svg class="ic" viewBox="0 0 16 16"><path d="M2.500.500h8l3 3v12h-11z" fill="#f4f9ff" stroke="#6f7d92"/><path d="M5 8q1-4 5-2V5l2 3-4 1 1-1Q7 6 5 8zM11 10q-1 4-5 2v1l-2-3 4-1-1 1q2 2 4 0z" fill="#1e9b2b" stroke="#1e9b2b"/></svg></button>
    </div>
    <ul class="tree panetree">
      <li><span class="twig"><button class="exp" aria-label="展开"></button></span><svg class="ic"><use href="#ball"/></svg>外观(color)</li>
      <li><span class="twig"><button class="exp" aria-label="展开"></button></span><svg class="ic"><use href="#scene"/></svg>布景</li>
      <li><span class="twig"><button class="exp" aria-label="展开"></button></span><svg class="ic"><use href="#decal"/></svg>贴图</li>
    </ul>
    <div class="splitter"></div>
    <div class="hintbox"><p>选择项目进行拖放。</p></div>
    <div class="splitter"><svg width="22" height="4" viewBox="0 0 22 4"><path d="M0 4l3-4 3 4zM8 4l3-4 3 4zM16 4l3-4 3 4z" fill="#111"/></svg></div>
    <div class="preview"></div>

    <div class="floating">
      <span>CommandManager</span>
      <svg width="16" height="13" viewBox="0 0 16 13"><path d="M.500.500h15v12H.500z" fill="#ccccf6" stroke="#222"/><path d="M1 1h14v2H1z" fill="#999"/><path d="M0 3.500h16" stroke="#222"/></svg>
    </div>
  </aside>

</main>
</body>
</html>
```

FILE: styles.css
```css
* {
	box-sizing: border-box;
}

body {
	margin: 0;
	height: 100vh;
	display: flex;
	flex-direction: column;
	overflow: hidden;
	padding: 0 2px;
	border-top: 3px solid #d2cd86;
	background: #d2cd86;
	font-family: "Noto Sans", "Noto Sans CJK SC", sans-serif;
	font-size: 12px;
	line-height: 20px;
	color: #000;
}

button {
	padding: 0;
	border: 0;
	background: none;
	font: inherit;
	color: inherit;
	display: flex;
	align-items: center;
}

input {
	font: inherit;
	border: 0;
	background: none;
	outline: none;
	min-width: 0;
}

ul {
	list-style: none;
	margin: 0;
	padding: 0;
}

.defs {
	position: absolute;
	width: 0;
	height: 0;
}

.ic {
	width: 16px;
	height: 16px;
	flex: none;
}

.ic.small {
	width: 13px;
	height: 13px;
}

/* little down arrow after an icon */
.drop::after {
	content: "";
	margin-left: 7px;
	border: 3px solid transparent;
	border-top-color: #333;
	border-bottom: 0;
}

.off::after {
	border-top-color: #aaa;
}

/* title bar */
.titlebar {
	height: 29px;
	flex: none;
	display: flex;
	border-bottom: 1px solid #111;
	background: #e4e4e6;
}

.logo {
	width: 134px;
	flex: none;
	display: flex;
	align-items: center;
	padding-left: 3px;
	gap: 2px;
	border-right: 9px solid #a9abc6;
	background: #dcdcda;
	color: #dc9494;
}

.wordmark {
	font: italic 13px "Liberation Sans", sans-serif;
}

.menu {
	width: 474px;
	flex: none;
	display: flex;
	align-items: center;
	gap: 16px;
	padding-left: 9px;
	color: #2c2c58;
	border-right: 2px solid #85889c;
	background: linear-gradient(#eeeef6, #d2d4e4 50%, #bcbed4);
}

.menu button {
	white-space: nowrap;
	flex: none;
}

.menu .pin {
	margin-left: -8px;
}

.toolbar {
	flex: 1;
	min-width: 0;
	display: flex;
	align-items: center;
	padding-left: 4px;
	background: linear-gradient(#f2f2f3, #dededf);
}

.tool {
	width: 24px;
	flex: none;
}

.tool.drop {
	width: 36px;
}

.select {
	width: 35px;
	height: 22px;
	flex: none;
	padding-left: 2px;
	border: 1px solid #74778c;
	border-radius: 4px;
	background: linear-gradient(90deg, #b4b6d0 20px, #74778c 20px, #74778c 21px, #dcdde6 21px);
}

.light {
	margin-left: 2px;
	width: 23px;
}

.docname {
	flex: none;
	margin-right: 8px;
	color: #333;
}

.search {
	flex: 1;
	min-width: 0;
	max-width: 201px;
	height: 22px;
	display: flex;
	align-items: center;
	padding: 0 4px;
	gap: 5px;
	border: 1px solid #555a6a;
	border-radius: 3px;
	background: linear-gradient(#fff, #e6e8f0);
}

.search input {
	flex: 1;
	padding: 0;
}

.search input::placeholder {
	color: #555;
	opacity: 1;
}

.search .drop::after {
	margin-left: 6px;
}

.wincontrols {
	margin-left: auto;
	display: flex;
	align-items: center;
	gap: 8px;
	padding-right: 3px;
}

.wincontrols .drop {
	width: 28px;
}

.workspace {
	flex: 1;
	min-height: 0;
	display: flex;
	background: #e1e4eb;
}

/* feature manager */
.manager {
	width: 196px;
	flex: none;
	display: flex;
	flex-direction: column;
	border-right: 1px solid #4c5068;
	border-top: 2px solid #a4a8b8;
	padding-right: 1px;
	background: linear-gradient(90deg, #e1e4eb 193px, #a4a8b8 194px);
}

.tabs {
	height: 28px;
	flex: none;
	display: flex;
	align-items: flex-end;
	gap: 1px;
	border-top: 1px solid #f4f5f8;
	border-bottom: 1px solid #8c90a4;
	background: #d0d2e6;
}

.tab {
	width: 27px;
	height: 21px;
	justify-content: center;
	border: 1px solid #84889c;
	border-bottom: 0;
	border-radius: 4px 4px 0 0;
	background: linear-gradient(#c6c9d8, #aeb2c8);
}

.tab.active {
	height: 23px;
	background: #eceef4;
}

.more {
	margin-left: auto;
	margin-right: 4px;
	height: 22px;
}

.filter {
	position: relative;
	flex: none;
	padding: 1px 1px 2px;
}

.filter input {
	display: block;
	width: 100%;
	height: 18px;
	padding: 0 8px 0 22px;
	border: 1px solid #7c8090;
	border-radius: 9px;
	background: linear-gradient(#d6d8e8, #fff 60%);
}

.filter svg {
	position: absolute;
	left: 8px;
	top: 4px;
}

.treebox {
	flex: 1;
	min-height: 0;
	display: flex;
	border-bottom: 1px solid #fff;
}

.tree {
	flex: 1;
	min-width: 0;
	overflow: hidden;
}

.manager .tree {
	border-right: 1px solid #fff;
}

.tree li {
	height: 20px;
	display: flex;
	align-items: center;
	padding-left: 6px;
	white-space: nowrap;
	background: linear-gradient(#8086a0 1px, transparent 1px) 10px 0 / 1px 2px repeat-y;
}

.tree .ic {
	margin-right: 5px;
}

.tree .root {
	padding-left: 2px;
	background: none;
}

.twig {
	width: 15px;
	height: 9px;
	flex: none;
	padding-left: 5px;
	background: linear-gradient(90deg, #8086a0 1px, transparent 1px) 0 4px / 2px 1px repeat-x content-box;
}

.exp {
	width: 9px;
	height: 9px;
	margin-left: -5px;
	border: 1px solid #8a8f9e;
	background:
		linear-gradient(#234, #234) center / 5px 1px no-repeat,
		linear-gradient(#234, #234) center / 1px 5px no-repeat,
		#fff;
}

.vscroll {
	width: 13px;
	flex: none;
	display: flex;
	flex-direction: column;
	background: #f0f0f0;
}

.vscroll button {
	height: 17px;
	justify-content: center;
}

.vthumb {
	height: 60%;
	background: #cdcdcd;
}

.end {
	margin-top: auto;
}

.hscroll {
	height: 13px;
	flex: none;
	display: flex;
	background: #f0f0f0;
}

.hscroll button {
	width: 16px;
	justify-content: center;
}

.hthumb {
	width: 86px;
	background: #cdcdcd;
}

.hscroll .end {
	margin: 0 14px 0 auto;
}

/* graphics area */
.viewport {
	flex: 1;
	min-width: 0;
	position: relative;
	background: #c5c8d3;
	border-right: 1px solid #111;
}

.scene {
	position: absolute;
	inset: 0;
	width: 100%;
	height: 100%;
}

.axis {
	font: bold 10px "Liberation Serif", serif;
}

.headsup {
	position: relative;
	display: flex;
	justify-content: center;
	padding: 6px 0 0 3px;
}

.headsup button {
	width: 23px;
}

.headsup .drop {
	width: 33px;
}

.headsup .drop::after {
	margin-left: 4px;
	border-top-color: #555;
}

.doccontrols {
	position: absolute;
	top: 6px;
	right: 9px;
	display: flex;
	gap: 7px;
}

.handle {
	position: absolute;
	left: -2px;
	top: 357px;
	width: 10px;
	height: 28px;
	justify-content: center;
	border: 1px solid #6d7088;
	border-left: 0;
	border-radius: 0 3px 3px 0;
	background: #dfe1ee;
}

.sidetabs {
	position: absolute;
	right: -2px;
	top: 60px;
	z-index: 1;
}

.sidetabs button {
	width: 25px;
	height: 24px;
	justify-content: center;
	border: 1px solid #7c8098;
	border-radius: 4px 0 0 4px;
	background: linear-gradient(#c4c7d8, #adb1c6);
}

.sidetabs .active {
	background: #eceef4;
	border-right-color: #eceef4;
}

/* task pane */
.taskpane {
	width: 336px;
	flex: none;
	position: relative;
	display: flex;
	flex-direction: column;
	border-left: 3px solid #9598aa;
	border-top: 2px solid #a4a8b8;
}

.panehead {
	height: 18px;
	flex: none;
	display: flex;
	align-items: center;
	padding: 0 2px 0 8px;
	background: linear-gradient(#e6e7f2, #b4b7cc);
}

.panehead h2 {
	flex: 1;
	margin: 0;
	font-size: 12px;
	line-height: 14px;
	text-align: center;
	color: #2c2c64;
}

.panetools {
	height: 30px;
	flex: none;
	display: flex;
	align-items: center;
	gap: 7px;
	padding-left: 5px;
	border-bottom: 1px solid #8c90a4;
	background: linear-gradient(#d8daea, #e0e2ee);
}

.panetree {
	flex: none;
	height: 185px;
	padding: 7px 0 0 1px;
}

.panetree li:first-child {
	background-position: 10px 10px;
	background-repeat: repeat-y;
	background-clip: content-box;
}

.panetree li:last-child {
	background: none;
}

.splitter {
	height: 5px;
	flex: none;
	text-align: center;
	line-height: 0;
	border: 2px solid #9598aa;
	border-bottom-color: #5c6080;
	border-left: 0;
	border-right: 0;
}

.hintbox {
	flex: none;
	height: 60px;
	margin: 6px 4px 6px 5px;
	border: 1px solid #111;
	border-radius: 9px;
	background: #ffff80;
	text-align: center;
}

.hintbox p {
	margin: 0;
}

.preview {
	flex: 1;
}

/* undocked CommandManager */
.floating {
	position: absolute;
	left: 89px;
	top: 7px;
	width: 175px;
	height: 37px;
	display: flex;
	align-items: center;
	justify-content: space-between;
	padding: 0 2px 0 22px;
	border: 2px solid #62667e;
	background: linear-gradient(#eeeef6, #b9bcd2 85%, #dcdeea);
	color: #2c2c58;
	font: bold 11px "DejaVu Sans Condensed", "DejaVu Sans", sans-serif;
}
```
